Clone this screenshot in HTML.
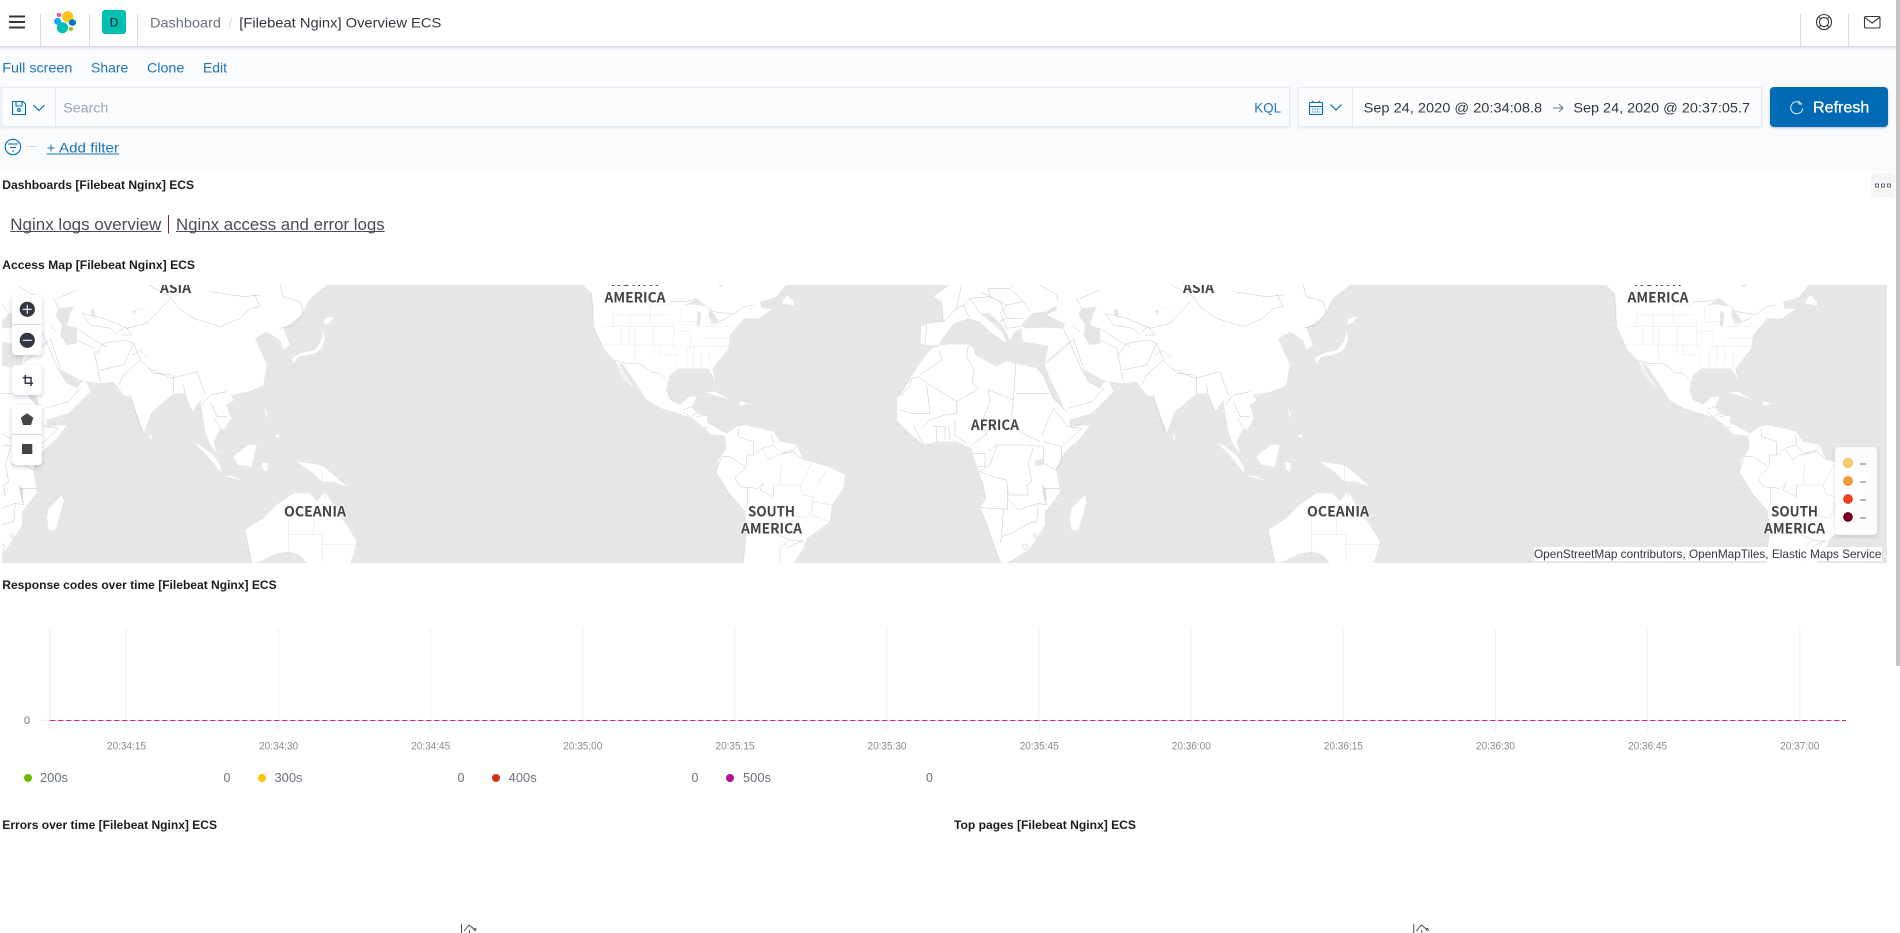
<!DOCTYPE html>
<html lang="en">
<head>
<meta charset="utf-8">
<title>[Filebeat Nginx] Overview ECS</title>
<style>
html,body{margin:0;padding:0;width:1900px;height:933px;overflow:hidden;background:#fff;font-family:"Liberation Sans",sans-serif}
.abs{position:absolute;box-sizing:border-box}
#hdr{left:0;top:0;width:1900px;height:47px;background:#fff;border-bottom:1px solid #d3dae6;box-shadow:0 1px 3px rgba(152,162,179,.35);z-index:2}
#bar{left:0;top:47px;width:1900px;height:125px;background:#fafbfd}
.inp{background:#fbfcfd;border:1px solid #e6e9f0;box-shadow:0 1px 2px rgba(152,162,179,.22);top:87px;height:40px}
.dv{background:#d3dae6;width:1px}
#map{left:2px;top:285px;width:1885px;height:278px;overflow:hidden}
.card{background:#fff;border-radius:4px;box-shadow:0 2px 5px rgba(90,100,120,.3);left:12px;width:30px;z-index:3}
#top{left:0;top:0;width:1900px;height:933px;z-index:5;pointer-events:none}
text{font-family:"Liberation Sans",sans-serif}
#map text{font-family:"Noto Sans CJK JP","Liberation Sans",sans-serif}
</style>
</head>
<body>
<div class="abs" id="hdr"></div>
<div class="abs" id="bar"></div>
<div class="abs dv" style="left:40px;top:14px;height:32px;z-index:3"></div>
<div class="abs dv" style="left:89px;top:14px;height:32px;z-index:3"></div>
<div class="abs dv" style="left:137px;top:14px;height:32px;z-index:3"></div>
<div class="abs dv" style="left:1800px;top:14px;height:32px;z-index:3"></div>
<div class="abs dv" style="left:1848px;top:14px;height:32px;z-index:3"></div>

<div class="abs inp" style="left:1px;width:1289px"></div>
<div class="abs" style="left:55px;top:88px;width:1px;height:38px;background:#e6e9f0"></div>
<div class="abs inp" style="left:1298px;width:464px"></div>
<div class="abs" style="left:1352px;top:88px;width:1px;height:38px;background:#e6e9f0"></div>
<div class="abs" style="left:1770px;top:87px;width:118px;height:40px;background:#006bb4;border-radius:4px;box-shadow:0 1px 2px rgba(0,60,110,.3)"></div>
<div class="abs" style="left:1871px;top:173px;width:24px;height:24px;background:#f5f5f5;border-radius:3px"></div>

<svg class="abs" id="map" viewBox="2 285 1885 278" xmlns="http://www.w3.org/2000/svg">
<defs>
<pattern id="sea" width="10" height="8" patternUnits="userSpaceOnUse">
<rect width="10" height="8" fill="#e5e5e5"/>
<path d="M0 4Q2.5 2 5 4T10 4" fill="none" stroke="#ebebeb" stroke-width="1.1"/>
</pattern>
<g id="world" transform="translate(900,285) scale(.33333)" stroke-linejoin="round">
<!-- Americas -->
<g transform="translate(-930,0)">
<path fill="#fff" d="M-21,0L5,25L10,70L10,125L40,190L72,225L95,270L128,315L125,300L100,262L85,232L100,240L135,290L170,345L215,370L280,390L310,400L345,430L360,447L405,452L410,445L400,440L350,412L352,392L325,388L305,368L320,335L298,335L270,360L240,345L228,315L240,270L265,250L355,250L380,292L368,250L415,190L420,150L462,100L505,100L550,72L515,70L510,50L560,35L590,0Z"/>
<path fill="#fff" d="M575,55L590,30L612,50L612,62ZM345,322L375,320L420,345L390,335ZM448,348L475,355L450,362Z"/>
<path fill="#fff" d="M405,450L440,425L465,420L550,440L570,470L620,480L640,525L715,545L765,570L760,610L725,660L720,710L650,760L640,790L610,834L460,834L470,720L465,680L420,630L380,565L385,525L410,490Z"/>
<path fill="#e5e5e5" d="M280,62L320,42L345,65L310,58ZM322,78L335,85L328,128L320,120ZM360,72L388,110L365,115L355,90ZM355,125L420,92L430,88L395,110ZM385,0L400,0L392,8Z"/>
<path fill="none" stroke="#d6d6d6" stroke-width="1.2" stroke-dasharray="3 1" d="M40,125H250M40,180H260M70,75V125M120,90V180M180,60V120M135,130V230M92,125V180M192,125V210M250,110V180M210,180V210H260V240M260,140H300V190H290V245M310,180V245M335,190V245M360,195V245M300,185H420M340,160H420M340,125H430M275,70V110H330M70,90H120M120,90H240M180,60H240"/>
<path fill="none" stroke="#b8b8b8" stroke-width="1.2" d="M75,225L105,235L145,235L165,245L185,262L210,265L235,290M280,375L305,365M280,380L300,395L320,385M320,395L350,390M340,430L355,425M240,50L280,50L320,42L370,80L430,88L462,65L490,60"/>
<path fill="none" stroke="#b8b8b8" stroke-width="1.2" d="M445,430L445,455L490,470L490,510L470,510M490,510L515,490L550,480L548,450M550,480L575,505L610,495L620,480M515,490L540,525L560,510L610,500L640,525M470,510L468,545L435,580L450,605L500,610L520,595L510,615L550,635L550,600M380,555L395,515L420,515L465,545"/>
<path fill="none" stroke="#d0d0d0" stroke-width="1.2" d="M550,600H630L665,535M575,535L570,595M630,600L640,630L670,635L660,680L650,700L610,690M680,600L715,550M725,660L670,650L665,690L720,710"/>
<path fill="none" stroke="#b8b8b8" stroke-width="1.2" d="M472,610L472,660M640,770L600,765L570,790L570,830M590,790L640,765M565,750L600,765"/>
<path fill="none" stroke="#cfd8e3" stroke-width="2" d="M5,25L10,125L40,190M72,225L128,315M380,565L420,630L465,680M470,720L460,834M368,250L380,292M590,0L560,35"/>
</g>
<!-- Africa, Eurasia -->
<path fill="#fff" d="M118,182L90,195L60,235L30,280L0,330L-9,336L-9,405L30,445L70,478L110,470L170,470L215,490L222,520L235,555L245,585L258,640L240,670L265,730L285,790L302,834L320,834L385,795L415,752L435,720L435,680L480,622L468,550L495,500L540,460L570,420L510,425L508,405L500,380L460,340L430,270L412,250L345,235L320,228L290,245L225,210L222,192L208,178L150,178Z"/>
<path fill="#fff" d="M150,0L100,35L125,50L130,110L62,120L60,175L90,182L115,180L135,150L160,115L205,100L240,110L270,140L320,175L305,140L240,85L270,85L310,125L330,165L345,140L365,130L365,150L370,170L445,182L435,240L440,255L450,280L480,340L505,405L575,385L640,320L625,285L610,295L600,310L570,295L545,250L610,285L665,295L710,290L740,330L760,335L790,420L800,445L820,390L825,380L890,325L920,325L945,380L970,345L985,440L1000,480L1020,505L1010,470L1030,430L1040,435L1062,400L1048,360L1070,345L1060,330L1114,320L1159,300L1169,240L1134,160L1169,140L1209,165L1219,195L1239,180L1219,130L1269,95L1299,40L1349,0Z"/>
<path fill="#fff" d="M515,670L555,630L560,650L535,735L515,735L510,700Z"/>
<path fill="#e5e5e5" d="M365,125L395,85L440,80L470,60L470,75L440,90L495,115L490,130L430,128L380,130ZM535,90L545,70L590,65L580,85L570,120L600,130L600,175L570,180L550,150L555,120ZM640,75L652,72L655,95L645,92ZM765,78L815,65L780,72L772,88ZM405,525L430,522L430,540L405,542ZM425,600L440,610L437,660L430,630Z"/>
<g fill="none" stroke="#b4b4b4" stroke-width="1.2">
<path d="M118,195L125,225L60,270M60,275L35,280L30,300L5,330M205,180L200,215L220,250L218,295L235,312M60,280L170,350L235,312M80,300L90,385L35,385L0,375M170,350L170,385L135,390L90,405L65,430M265,315L340,345L348,235M348,325L450,325M265,315L270,350L250,400L260,450M340,345L335,390L360,440L420,470M430,470L485,485L545,430L505,425L460,370L425,450M485,485L485,530L470,555L430,535L430,485L380,480L290,480L265,500M290,480L270,540L240,560L280,575L320,585L325,630L385,630L380,600L395,590L385,535L400,490M240,668L310,672L322,672L322,615M310,672L305,755L335,745L385,715M322,640L355,675L415,655L410,710L385,715M415,655L440,660L430,610L480,610M305,755L300,775M40,420L70,478M110,425V470M135,425V465M145,425L150,465M95,420L110,425L135,425M165,405L165,450L200,475M215,480L262,445M218,505H255V545H235"/>
<circle cx="375" cy="785" r="8"/><circle cx="405" cy="752" r="6"/>
<path d="M62,120H80L75,175M130,110L170,70L190,60L210,100M190,60L210,40L270,35L320,60L370,50L390,80M240,20L300,50L320,100L300,110M210,40L240,85M270,35L265,10L330,10L370,50M320,60L300,85L320,130L360,125L380,100M320,100L370,100M170,70L185,0M340,0L330,10M420,0L470,30L475,50"/>
<path d="M490,130L510,175L445,230L440,235M510,175L545,255M505,370L575,350L610,310M440,230L495,180L520,165M545,255L570,295M520,160L550,250M520,125L540,140M600,165L650,190L660,240L670,290M655,210L680,175L745,165L770,175L740,240L670,255M770,175L790,225L740,270L725,300M615,85L640,120L700,130L720,150M600,130L660,170L690,185M615,85L680,100L750,130L810,115L880,40M880,35L905,70L950,100L1030,125L1090,100L1120,70L1150,65M790,225L815,250L885,280L960,260L985,330M890,270V325M920,300L925,335M975,360L1000,330L1050,320M1000,350L1020,395L1050,395M1030,430L1012,400M725,140L745,125L765,150L735,150M530,40L545,70M540,40L600,15M815,0L870,30L880,35M1000,20L1100,35L1150,30M1209,0L1219,35L1269,50L1280,85L1250,120L1210,130M1130,25L1150,65M815,250L830,265L885,270M765,210L790,195L810,215"/>
</g>
<path fill="none" stroke="#cfd8e3" stroke-width="2" d="M125,50L130,110M62,120L60,175M412,250L430,270L460,340L500,380M760,335L790,420L800,445M945,380L925,330M245,585L258,640M240,670L265,730L285,790L302,834M-9,336L0,330L30,280"/>
<g transform="translate(369,0)">
<path fill="#fff" d="M875,220L900,205L945,195L965,165L970,135L975,160L965,190L945,205L895,215L880,235ZM975,100L1005,95L985,115L972,118ZM447,445L458,460L452,465ZM585,475L620,510L665,565L660,540L640,510L600,480ZM670,572L730,588L700,575ZM700,515L745,480L770,480L755,545L715,540ZM795,365L805,400L798,390ZM825,450L838,448L835,462ZM785,530L805,535L800,560L790,555ZM890,530L965,540L1040,605L1000,590L965,590L940,565L920,550Z"/>
<path fill="#fff" d="M735,735L790,700L830,660L880,625L930,625L950,650L975,620L1000,660L1040,720L1070,770L1060,810L1050,834L920,834L900,810L870,800L830,805L780,830L755,834Z"/>
<path fill="none" stroke="#d0d0d0" stroke-width="1.2" stroke-dasharray="3 1" d="M865,700V834M865,748H967V834M940,690V748M967,778H1070M965,540V595"/>
<path fill="none" stroke="#cfd8e3" stroke-width="2" d="M735,735L755,834M975,620L975,640M390,330L425,440"/>
</g>
</g>
</defs>
<rect x="2" y="285" width="1885" height="278" fill="url(#sea)"/>
<use href="#world" transform="translate(-1023,0)"/>
<use href="#world"/>
<use href="#world" transform="translate(1023,0)"/>
<g font-weight="700" font-size="14" fill="#444" text-anchor="middle" style="paint-order:stroke" stroke="#fff" stroke-opacity=".7" stroke-width="2">
<text x="175.5" y="293" textLength="31" lengthAdjust="spacingAndGlyphs">ASIA</text>
<text x="1198.5" y="293" textLength="31" lengthAdjust="spacingAndGlyphs">ASIA</text>
<text x="635" y="286" textLength="48" lengthAdjust="spacingAndGlyphs">NORTH</text>
<text x="1658" y="286" textLength="48" lengthAdjust="spacingAndGlyphs">NORTH</text>
<text x="635" y="302.5" textLength="61" lengthAdjust="spacingAndGlyphs">AMERICA</text>
<text x="1658" y="302.5" textLength="61" lengthAdjust="spacingAndGlyphs">AMERICA</text>
<text x="995" y="430" textLength="48" lengthAdjust="spacingAndGlyphs">AFRICA</text>
<text x="315" y="516.5" textLength="62" lengthAdjust="spacingAndGlyphs">OCEANIA</text>
<text x="1338" y="516.5" textLength="62" lengthAdjust="spacingAndGlyphs">OCEANIA</text>
<text x="771.5" y="516.5" textLength="47" lengthAdjust="spacingAndGlyphs">SOUTH</text>
<text x="771.5" y="533.3" textLength="61" lengthAdjust="spacingAndGlyphs">AMERICA</text>
<text x="1794.5" y="516.5" textLength="47" lengthAdjust="spacingAndGlyphs">SOUTH</text>
<text x="1794.5" y="533.3" textLength="61" lengthAdjust="spacingAndGlyphs">AMERICA</text>
</g>
</svg>

<div class="abs card" style="top:295px;height:60px"></div>
<div class="abs card" style="top:365px;height:30px"></div>
<div class="abs card" style="top:405px;height:60px"></div>
<div class="abs" style="left:12px;top:324px;width:30px;height:1px;background:#d3dae6;z-index:4"></div>
<div class="abs" style="left:12px;top:434px;width:30px;height:1px;background:#d3dae6;z-index:4"></div>
<div class="abs" style="left:1835px;top:447px;width:42px;height:88px;background:rgba(255,255,255,.88);border-radius:4px;box-shadow:0 2px 4px rgba(90,100,120,.22);z-index:3"></div>
<div class="abs" style="left:1534px;top:547px;width:348px;height:14px;background:rgba(255,255,255,.93);z-index:3"></div>

<svg class="abs" id="top" viewBox="0 0 1900 933" xmlns="http://www.w3.org/2000/svg">
<!-- scrollbar -->
<rect x="1896" y="0" width="4" height="666" fill="#c4c4c4"/>
<!-- header icons -->
<path d="M9 16.5H25M9 22H25M9 27.5H25" stroke="#343741" stroke-width="2" fill="none"/>
<circle cx="67.7" cy="16.7" r="5.6" fill="#fec514"/>
<circle cx="59" cy="15" r="2.1" fill="#f04e98"/>
<ellipse cx="57.6" cy="21.3" rx="3.6" ry="3.4" fill="#1ba9f5"/>
<circle cx="62.4" cy="27.7" r="5.6" fill="#00bfb3"/>
<ellipse cx="72.4" cy="22.6" rx="3.6" ry="3.3" fill="#0077cc"/>
<circle cx="71" cy="29" r="2.1" fill="#93c90e"/>
<rect x="102" y="10" width="24" height="24" rx="3" fill="#00bfb3"/>
<text x="114" y="26.5" font-size="12" fill="#1a1c21" text-anchor="middle">D</text>
<g fill="none" stroke="#343741" stroke-width="1.1">
<circle cx="1824" cy="22" r="7.5"/><circle cx="1824" cy="22" r="4.6"/>
<path d="M1819,17L1821,19M1829,17L1827,19M1819,27L1821,25M1829,27L1827,25"/>
<rect x="1864.5" y="16.5" width="15.5" height="11.5" rx="1.5"/>
<path d="M1865,17.5L1872.2,23L1879.5,17.5"/>
</g>
<!-- breadcrumb -->
<text x="150" y="27.5" font-size="14" fill="#69707d" textLength="71" lengthAdjust="spacingAndGlyphs">Dashboard</text>
<path d="M232,17L229,28" stroke="#d3dae6" fill="none"/>
<text x="239.3" y="27.5" font-size="14" fill="#343741" textLength="202" lengthAdjust="spacingAndGlyphs">[Filebeat Nginx] Overview ECS</text>
<!-- top nav -->
<g font-size="14" fill="#1f74b8">
<text x="2.3" y="72.5" textLength="70" lengthAdjust="spacingAndGlyphs">Full screen</text>
<text x="91" y="72.5" textLength="37.3" lengthAdjust="spacingAndGlyphs">Share</text>
<text x="147" y="72.5" textLength="37.3" lengthAdjust="spacingAndGlyphs">Clone</text>
<text x="203" y="72.5" textLength="24" lengthAdjust="spacingAndGlyphs">Edit</text>
</g>
<!-- search -->
<g fill="none" stroke="#006bb4" stroke-width="1.1">
<path d="M12.5,101.5H23L25.5,104V114.5H12.5Z"/>
<path d="M16,101.5V106H22V101.5"/>
<circle cx="19" cy="110" r="1.4"/>
<path d="M33.5,105L39,110.5L44.5,105" stroke-width="1.2"/>
<rect x="1309.5" y="102.5" width="13" height="12" rx="1"/>
<path d="M1309.5,106.5H1322.5M1313,100.5V103M1319,100.5V103"/>
<path d="M1312,109H1320.5M1312,112H1320.5" stroke-dasharray="1.3 1.2"/>
<path d="M1330.5,104.5L1336,110L1341.5,104.5" stroke-width="1.2"/>
</g>
<text x="63.3" y="112.5" font-size="14" fill="#98a2b3" textLength="45" lengthAdjust="spacingAndGlyphs">Search</text>
<text x="1254.3" y="112.5" font-size="14" fill="#1f74b8" textLength="26.7" lengthAdjust="spacingAndGlyphs">KQL</text>
<!-- date -->
<text x="1363.6" y="112.5" font-size="14" fill="#343741" textLength="178.5" lengthAdjust="spacingAndGlyphs">Sep 24, 2020 @ 20:34:08.8</text>
<path d="M1552.8,108H1563M1559,104.3L1563,108L1559,111.7" stroke="#69707d" fill="none"/>
<text x="1573.4" y="112.5" font-size="14" fill="#343741" textLength="176.6" lengthAdjust="spacingAndGlyphs">Sep 24, 2020 @ 20:37:05.7</text>
<path d="M1801,103.5A6,6 0 1 0 1802.7,108.5M1799,100.8V104H1802.4" stroke="#fff" stroke-width="1" fill="none" opacity=".9"/>
<text x="1813" y="112.5" font-size="16" fill="#fff" textLength="56.4" lengthAdjust="spacingAndGlyphs" stroke="#fff" stroke-width=".25">Refresh</text>
<!-- filter -->
<g fill="none" stroke="#006bb4" stroke-width="1.1">
<circle cx="12.9" cy="147" r="7.7"/>
<path d="M8,144H18M10,147.5H16M12,151H14"/>
</g>
<path d="M27,146.5H37" stroke="#d3dae6" fill="none"/>
<text x="46.7" y="152.5" font-size="14" fill="#1f74b8" textLength="72.3" lengthAdjust="spacingAndGlyphs">+ Add filter</text>
<path d="M46.7,154H119" stroke="#1f74b8" fill="none"/>
<!-- options -->
<g fill="none" stroke="#69707d">
<rect x="1875.5" y="184" width="3" height="3"/><rect x="1881.5" y="184" width="3" height="3"/><rect x="1887.5" y="184" width="3" height="3"/>
</g>
<!-- panel titles -->
<g font-size="12" font-weight="700" fill="#1a1c21">
<text x="2.3" y="189" textLength="191.7" lengthAdjust="spacingAndGlyphs">Dashboards [Filebeat Nginx] ECS</text>
<text x="2.3" y="269" textLength="192.7" lengthAdjust="spacingAndGlyphs">Access Map [Filebeat Nginx] ECS</text>
<text x="2.3" y="589" textLength="274.3" lengthAdjust="spacingAndGlyphs">Response codes over time [Filebeat Nginx] ECS</text>
<text x="2.3" y="829" textLength="214.7" lengthAdjust="spacingAndGlyphs">Errors over time [Filebeat Nginx] ECS</text>
<text x="954" y="829" textLength="182" lengthAdjust="spacingAndGlyphs">Top pages [Filebeat Nginx] ECS</text>
</g>
<!-- markdown links -->
<text x="10.3" y="230" font-size="16.5" fill="#4a4d55" textLength="151" lengthAdjust="spacingAndGlyphs">Nginx logs overview</text>
<path d="M10.3,231.5H161.3M176,231.5H384.7" stroke="#4a4d55" fill="none"/>
<path d="M168.5,215V233.5" stroke="#7a2048" stroke-width="1" fill="none"/>
<text x="176" y="230" font-size="16.5" fill="#4a4d55" textLength="208.7" lengthAdjust="spacingAndGlyphs">Nginx access and error logs</text>
<!-- map controls -->
<circle cx="27.3" cy="309.3" r="7.6" fill="#343741"/>
<path d="M22.8,309.3H31.8M27.3,304.8V313.8" stroke="#fff" stroke-width="1.1"/>
<circle cx="27.3" cy="340.3" r="7.6" fill="#343741"/>
<path d="M22.8,340.3H31.8" stroke="#fff" stroke-width="1.1"/>
<path d="M25.3,375V383.3H33M22.7,377.6H31V386" fill="none" stroke="#343741" stroke-width="1.5"/>
<path d="M27,413.3L33.3,417.6L31,425H23L20.8,417.6Z" fill="#444"/>
<rect x="22" y="444" width="10.3" height="10" fill="#444"/>
<!-- map legend -->
<g stroke-width=".7">
<circle cx="1848" cy="463" r="4.5" fill="#fdd26b" stroke="#d9a83e"/>
<circle cx="1848" cy="481" r="4.5" fill="#fd9a3a" stroke="#d97a20"/>
<circle cx="1848" cy="499" r="4.5" fill="#fc4020" stroke="#cc3010"/>
<circle cx="1848" cy="517" r="4.5" fill="#7a0022" stroke="#5a0018"/>
</g>
<path d="M1860,464H1866M1860,482H1866M1860,500H1866M1860,518H1866" stroke="#69707d" fill="none"/>
<text x="1534" y="558" font-size="12" fill="#343741" textLength="347.5" lengthAdjust="spacingAndGlyphs">OpenStreetMap contributors, OpenMapTiles, Elastic Maps Service</text>
<!-- chart -->
<g stroke="#f1f1f1" fill="none">
<path d="M50,628V730" stroke-width="1.6"/>
<path d="M40,720.5H50" stroke-width="1.6"/>
<path d="M126.5,628V731M278.6,628V731M430.7,628V731M582.8,628V731M735,628V731M887,628V731M1039.2,628V731M1191.3,628V731M1343.4,628V731M1495.5,628V731M1647.6,628V731M1799.8,628V731"/>
</g>
<path d="M50,720.5H1846" stroke="#d6237f" stroke-width="1.1" stroke-dasharray="5.5 2.5" fill="none"/>
<text x="27" y="724" font-size="11" fill="#69707d" text-anchor="middle">0</text>
<g font-size="11" fill="#858992" text-anchor="middle">
<text x="126.5" y="749.5" textLength="39" lengthAdjust="spacingAndGlyphs">20:34:15</text>
<text x="278.6" y="749.5" textLength="39" lengthAdjust="spacingAndGlyphs">20:34:30</text>
<text x="430.7" y="749.5" textLength="39" lengthAdjust="spacingAndGlyphs">20:34:45</text>
<text x="582.8" y="749.5" textLength="39" lengthAdjust="spacingAndGlyphs">20:35:00</text>
<text x="735" y="749.5" textLength="39" lengthAdjust="spacingAndGlyphs">20:35:15</text>
<text x="887" y="749.5" textLength="39" lengthAdjust="spacingAndGlyphs">20:35:30</text>
<text x="1039.2" y="749.5" textLength="39" lengthAdjust="spacingAndGlyphs">20:35:45</text>
<text x="1191.3" y="749.5" textLength="39" lengthAdjust="spacingAndGlyphs">20:36:00</text>
<text x="1343.4" y="749.5" textLength="39" lengthAdjust="spacingAndGlyphs">20:36:15</text>
<text x="1495.5" y="749.5" textLength="39" lengthAdjust="spacingAndGlyphs">20:36:30</text>
<text x="1647.6" y="749.5" textLength="39" lengthAdjust="spacingAndGlyphs">20:36:45</text>
<text x="1799.8" y="749.5" textLength="39" lengthAdjust="spacingAndGlyphs">20:37:00</text>
</g>
<circle cx="28" cy="778" r="4" fill="#6fb800"/>
<circle cx="262" cy="778" r="4" fill="#fec000"/>
<circle cx="496" cy="778" r="4" fill="#d4301b"/>
<circle cx="730" cy="778" r="4" fill="#b0149b"/>
<g font-size="12.5" fill="#69707d">
<text x="40" y="782" textLength="28" lengthAdjust="spacingAndGlyphs">200s</text>
<text x="274.5" y="782" textLength="28" lengthAdjust="spacingAndGlyphs">300s</text>
<text x="508.7" y="782" textLength="28" lengthAdjust="spacingAndGlyphs">400s</text>
<text x="743" y="782" textLength="28" lengthAdjust="spacingAndGlyphs">500s</text>
<text x="223.5" y="782">0</text>
<text x="457.5" y="782">0</text>
<text x="691.5" y="782">0</text>
<text x="926" y="782">0</text>
</g>
<!-- empty chart icons -->
<g fill="none" stroke="#343741" stroke-width=".9">
<path d="M461.5,924V933M464,931L469,925L474,929M469.5,930V933"/>
<circle cx="475" cy="929.5" r=".9"/>
<path d="M1413.8,924V933M1416.3,931L1421.3,925L1426.3,929M1421.8,930V933"/>
<circle cx="1427.3" cy="929.5" r=".9"/>
</g>
</svg>
</body>
</html>
